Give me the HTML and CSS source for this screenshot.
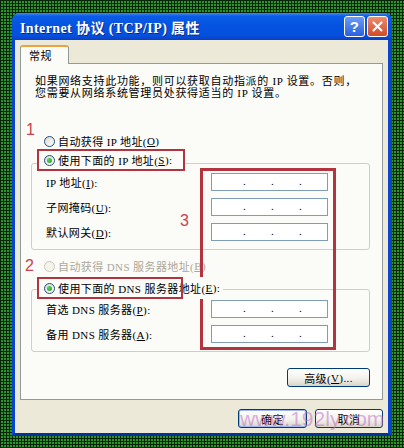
FILE: index.html
```html
<!DOCTYPE html>
<html lang="zh-CN">
<head>
    <meta charset="UTF-8">
    <meta name="viewport" content="width=device-width, initial-scale=1.0">
    <title>Internet 协议 (TCP/IP) 属性</title>
    <link rel="stylesheet" href="styles.css">
</head>
<body>
    <div class="window">
        <div class="titlebar">
            <span class="title">Internet 协议 (TCP/IP) 属性</span>
            <div class="tb-buttons">
                <span class="tb-btn help">?</span>
                <span class="tb-btn close">
                    <svg width="11" height="11" viewBox="0 0 11 11"><path d="M1.5 1.5 L9.5 9.5 M9.5 1.5 L1.5 9.5" stroke="#fff" stroke-width="2" stroke-linecap="round"/></svg>
                </span>
            </div>
        </div>

        <div class="client">
            <div class="tabs">
                <span class="tab">常规</span>
            </div>

            <div class="panel">
                <p class="desc">如果网络支持此功能，则可以获取自动指派的 IP 设置。否则，<br>您需要从网络系统管理员处获得适当的 IP 设置。</p>

                <label class="radio radio-auto"><span class="dot"></span>自动获得 IP 地址(<u>O</u>)</label>
                <div class="legend legend-ip">
                    <label class="radio"><span class="dot checked"></span>使用下面的 IP 地址(<u>S</u>):</label>
                </div>
                <div class="group">
                    <span>IP 地址(<u>I</u>):</span>
                    <span class="ip"><span>.</span><span>.</span><span>.</span></span>
                    <span>子网掩码(<u>U</u>):</span>
                    <span class="ip"><span>.</span><span>.</span><span>.</span></span>
                    <span>默认网关(<u>D</u>):</span>
                    <span class="ip"><span>.</span><span>.</span><span>.</span></span>
                </div>

                <label class="radio radio-dns disabled"><span class="dot"></span>自动获得 DNS 服务器地址(<u>B</u>)</label>
                <div class="legend legend-dns">
                    <label class="radio"><span class="dot checked"></span>使用下面的 DNS 服务器地址(<u>E</u>):</label>
                    <span class="legend-box"></span>
                </div>
                <div class="group group-dns">
                    <span>首选 DNS 服务器(<u>P</u>):</span>
                    <span class="ip"><span>.</span><span>.</span><span>.</span></span>
                    <span>备用 DNS 服务器(<u>A</u>):</span>
                    <span class="ip"><span>.</span><span>.</span><span>.</span></span>
                </div>

                <button class="btn btn-adv">高级(<u>V</u>)...</button>

                <span class="mark mark-1">1</span>
                <span class="mark mark-2">2</span>
                <span class="mark mark-3">3</span>
                <div class="redbox"></div>
            </div>

            <div class="actions">
                <button class="btn btn-ok">确定</button>
                <button class="btn btn-cancel">取消</button>
            </div>

            <span class="watermark">www.192ly.com</span>
        </div>
    </div>
</body>
</html>
```

FILE: styles.css
```css
body {
    margin: 0;
    padding: 13px 12px 0;
    height: 448px;
    box-sizing: border-box;
    overflow: hidden;
    background-color: #0a260a;
    background-image:
        linear-gradient(#0a260a 1px, transparent 1px),
        linear-gradient(90deg, #0a260a 1px, #2c962c 1px);
    background-size: 3px 3px, 3px 3px;
    font-family: "Liberation Serif", "Noto Sans CJK SC", serif;
    font-size: 11px;
    letter-spacing: 0.4px;
    color: #000;
}

.window {
    width: 380px;
}

.titlebar {
    height: 27px;
    box-sizing: border-box;
    padding: 0 4px 0 8px;
    display: flex;
    align-items: center;
    justify-content: space-between;
    border-radius: 7px 7px 0 0;
    background: linear-gradient(#3d8af5 0%, #0a5ce6 12%, #0453e0 50%, #0550dc 85%, #0a3fc0 100%);
}

.title {
    color: #fff;
    font-weight: bold;
    font-size: 14px;
    letter-spacing: 0.4px;
    text-shadow: 1px 1px #0a2a8a;
    white-space: nowrap;
}

.tb-buttons {
    display: flex;
    gap: 2px;
}

.tb-btn {
    width: 21px;
    height: 21px;
    box-sizing: border-box;
    border: 1px solid #fff;
    border-radius: 3px;
    display: flex;
    align-items: center;
    justify-content: center;
}

.help {
    background: linear-gradient(#6b9cf7, #2a60dc);
    color: #fff;
    font: bold 15px "Liberation Sans", sans-serif;
}

.close {
    background: linear-gradient(#ee8c6c, #d24a26);
}

.client {
    position: relative;
    height: 396px;
    box-sizing: border-box;
    padding: 5px 5px 0;
    border: solid #0845cc;
    border-width: 0 4px 3px 3px;
    border-bottom-color: #06309e;
    background: #ece9d8;
}

.tabs {
    display: flex;
    height: 18px;
    position: relative;
    z-index: 1;
}

.tab {
    width: 49px;
    height: 19px;
    box-sizing: border-box;
    padding: 2px 0 0 8px;
    border: 1px solid #919b9c;
    border-top: 2px solid #f0a33c;
    border-bottom: none;
    border-radius: 3px 3px 0 0;
    background: #fbfbf8;
    line-height: 15px;
}

.panel {
    position: relative;
    height: 337px;
    box-sizing: border-box;
    padding: 0 12px 0 10px;
    border: 1px solid #919b9c;
    background: #fbfbf8;
    display: flex;
    flex-direction: column;
}

.desc {
    margin: 11px 0 0 4px;
    line-height: 12px;
    letter-spacing: 0.7px;
    white-space: nowrap;
}

.radio {
    display: flex;
    align-items: center;
    height: 14px;
    white-space: nowrap;
}

.radio-auto {
    margin: 35px 0 0 13px;
}

.radio-dns {
    margin: 9px 0 0 13px;
}

.disabled {
    color: #aca899;
}

.dot {
    position: relative;
    flex: none;
    width: 11px;
    height: 11px;
    box-sizing: border-box;
    margin-right: 3px;
    border: 1px solid #1c5180;
    border-radius: 50%;
    background: linear-gradient(135deg, #dcd9cd, #fff);
}

.disabled .dot {
    border-color: #cac8bb;
    background: #f5f4ea;
}

.dot.checked::after {
    content: "";
    position: absolute;
    inset: 2px;
    border-radius: 50%;
    background: radial-gradient(circle at 35% 35%, #5fd35f, #1f9a1f);
}

.legend {
    position: relative;
    z-index: 1;
    height: 22px;
    box-sizing: border-box;
    margin-left: 6px;
    display: flex;
    align-items: center;
}

.legend-ip {
    width: 148px;
    margin-top: 1px;
    margin-bottom: -8px;
    padding-left: 5px;
    border: 2px solid #b3343f;
    background: #fbfbf8;
}

.legend-dns {
    width: fit-content;
    margin-top: 4px;
    margin-bottom: -10px;
    padding: 0 3px 0 7px;
    background: #fbfbf8;
}

.legend-box {
    position: absolute;
    left: 0;
    top: 0;
    width: 146px;
    height: 22px;
    box-sizing: border-box;
    border: 2px solid #b3343f;
}

.group {
    display: grid;
    grid-template-columns: 165px 117px;
    grid-auto-rows: 18px;
    row-gap: 7px;
    align-items: center;
    padding: 9px 0 8px 14px;
    border: 1px solid #d0d0bf;
    border-radius: 3px;
}

.group-dns {
    padding-top: 10px;
}

.ip {
    height: 18px;
    box-sizing: border-box;
    padding-left: 31px;
    border: 1px solid #7f9db9;
    background: #fff;
    display: flex;
    line-height: 14px;
}

.ip span {
    width: 30px;
}

.btn {
    height: 19px;
    box-sizing: border-box;
    padding: 0;
    border: 1px solid #003c74;
    border-radius: 3px;
    background: linear-gradient(#fff, #f3f2ec 55%, #d8d4c6);
    font-family: inherit;
    font-size: 11px;
    letter-spacing: 0.4px;
    color: #000;
    display: flex;
    align-items: center;
    justify-content: center;
}

.btn-adv {
    align-self: flex-end;
    width: 83px;
    margin-top: 16px;
}

.actions {
    display: flex;
    justify-content: flex-end;
    gap: 8px;
    margin-top: 9px;
}

.btn-ok {
    width: 69px;
    box-shadow: inset 0 0 0 1px #9db7ee;
}

.btn-cancel {
    width: 68px;
}

.mark {
    position: absolute;
    color: #c8424f;
    font: 16px "Liberation Sans", sans-serif;
    line-height: 16px;
}

.mark-1 { left: 5px; top: 58px; }
.mark-2 { left: 4px; top: 194px; }
.mark-3 { left: 159px; top: 149px; }

.redbox {
    position: absolute;
    left: 179px;
    top: 104px;
    width: 136px;
    height: 182px;
    box-sizing: border-box;
    border: 3px solid #b3343f;
}

.watermark {
    position: absolute;
    left: 225px;
    top: 367px;
    font: 21px "Liberation Sans", sans-serif;
    letter-spacing: 0;
    color: rgba(190, 110, 200, 0.55);
    pointer-events: none;
    white-space: nowrap;
}
```
